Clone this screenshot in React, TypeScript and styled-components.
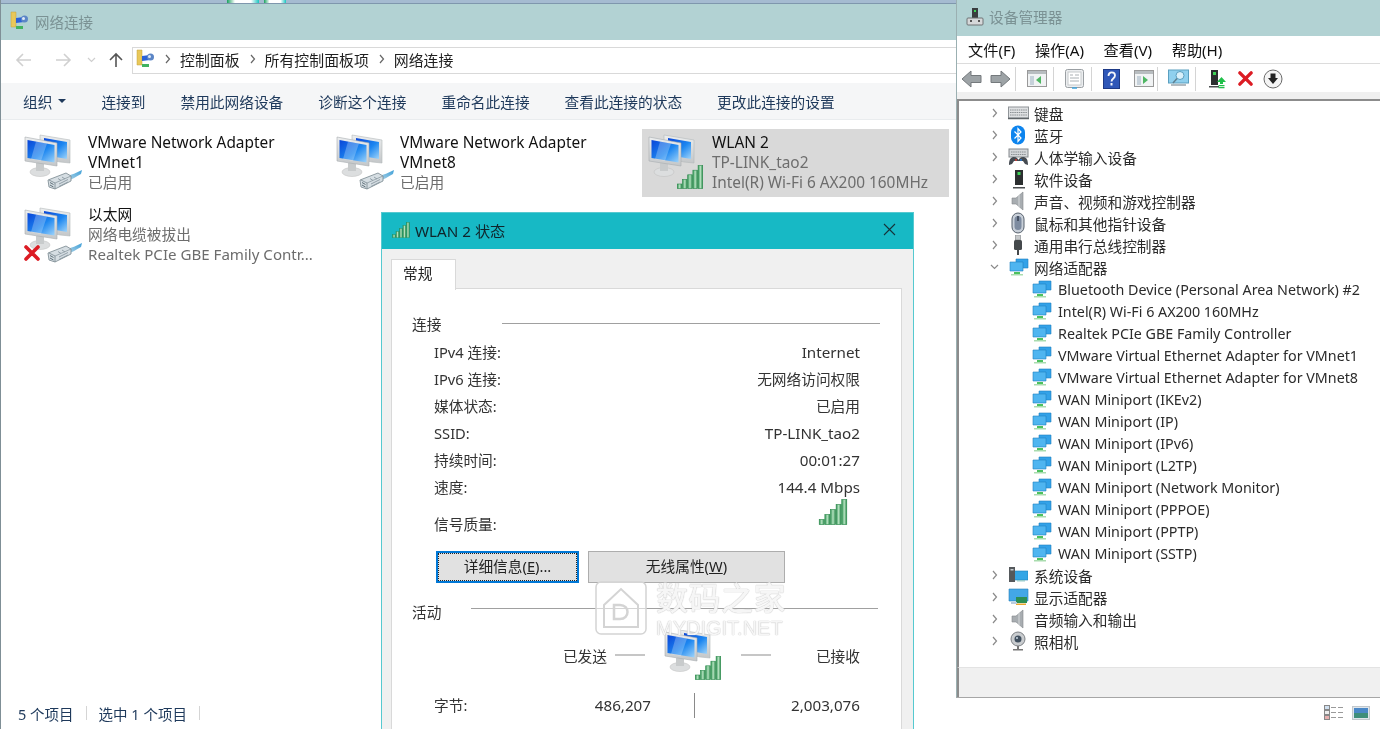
import React from "react";
import styled, { createGlobalStyle } from "styled-components";

const Global = createGlobalStyle`
  html, body { margin: 0; padding: 0; background: #fff; overflow: hidden; }
  * { box-sizing: border-box; }
  body { font-family: "Noto Sans", "Noto Sans CJK SC", sans-serif; color: #222; }
`;

const Screen = styled.div`
  position: relative; width: 1380px; height: 729px; display: flex; overflow: hidden; background: #fff;
  filter: blur(0.35px);
`;
const NetworkWindow = styled.div`
  width: 956px; height: 729px; display: flex; flex-direction: column; border-left: 1px solid #7f8f96;
`;
const DesktopStrip = styled.div`
  height: 4px; background: #a5bbd1; display: flex; border-bottom: 1px solid #7f97ad; flex: none;
`;
const StripBit = styled.span<{ $ml: number; $w: number }>`
  margin-left: ${p => p.$ml}px; width: ${p => p.$w}px; height: 3px;
  background: linear-gradient(90deg, #19a15f, #fff 25%, #fff 75%, #18c4c0);
`;
const TitleBar = styled.div`
  height: 36px; flex: none; background: #b2d2d3; display: flex; align-items: center; gap: 6px;
  padding: 0 0 2px 9px; font-size: 14.5px; color: #7b9294;
`;
const AddressRow = styled.div`
  height: 43px; flex: none; display: flex; align-items: center; background: #fff; padding-bottom: 3px;
`;
const NavButton = styled.span<{ $w: number }>`
  width: ${p => p.$w}px; display: flex; justify-content: center; flex: none;
`;
const AddressBox = styled.div`
  flex: 1; height: 27px; margin-left: 4px; border: 1px solid #d9d9d9; border-right: none;
  display: flex; align-items: center; padding: 0 0 2px 3px; font-size: 14.9px; color: #1f1f1f;
`;
const Crumb = styled.span` margin-left: 8px; `;
const CrumbArrow = styled.span`
  display: flex; margin-left: 8px;
`;
const CommandBar = styled.div`
  height: 37px; flex: none; background: #f5f6f7; border-bottom: 1px solid #e9ecee; display: flex; align-items: center;
  padding-left: 22px; gap: 35px; font-size: 14.7px; color: #1e395b;
`;
const OrganizeLabel = styled.span`
  display: flex; align-items: center; gap: 6px;
`;
const Caret = styled.i`
  width: 0; height: 0; border-left: 4px solid transparent; border-right: 4px solid transparent; border-top: 4px solid #1e395b;
`;
const Items = styled.div`
  flex: 1; display: grid; grid-template-columns: repeat(3, 307px); grid-auto-rows: 68px; gap: 5px;
  padding: 9px 0 0 17px; align-content: start;
`;
const Item = styled.div<{ $sel?: boolean }>`
  display: flex; background: ${p => (p.$sel ? "#d9d9d9" : "transparent")}; padding: 3px 0 0 4px; position: relative;
`;
const ItemIcon = styled.div`
  width: 66px; height: 60px; flex: none; position: relative;
`;
const ItemText = styled.div`
  font-size: 15.4px; line-height: 20px; white-space: nowrap; color: #111; padding-top: 1px;
`;
const ItemCn = styled.div`
  font-size: 14.7px; line-height: 21px; margin-top: -2px;
`;
const ItemSub = styled.div<{ $narrow?: boolean; $cn?: boolean }>`
  color: #6d6d6d; line-height: 20px;
  margin-top: ${p => (p.$cn ? "-1px" : "0")};
  font-size: ${p => (p.$cn ? "14.7px" : p.$narrow ? "15.1px" : "15.4px")};
`;
const RedCross = styled.span`
  position: absolute; left: 1px; bottom: 3px; display: flex;
`;
const StatusBar = styled.div`
  height: 25px; flex: none; display: flex; align-items: center; padding: 0 0 7px 17px; font-size: 14.5px; color: #1e395b;
`;
const StatusSep = styled.i`
  width: 1px; height: 14px; background: #d5d5d5; margin: 0 12px;
`;

const RightColumn = styled.div`
  flex: 1; display: flex; flex-direction: column; height: 729px;
`;
const DeviceWindow = styled.div`
  height: 698px; flex: none; display: flex; flex-direction: column; border-bottom: 1px solid #a6a6a6;
  border-left: 1px solid #9bb0b2; background: #fff;
`;
const DeviceTitle = styled.div`
  height: 36px; flex: none; background: #b2d2d3; display: flex; align-items: center; gap: 5px; padding: 0 0 3px 9px;
  font-size: 14.7px; color: #7b9294;
`;
const MenuBar = styled.div`
  height: 27px; flex: none; display: flex; align-items: center; gap: 19.500px; padding: 0 0 2px 11px; font-size: 15.200px; color: #111;
`;
const ToolBar = styled.div`
  height: 29px; flex: none; border-top: 1px solid #dcdcdc; display: flex; align-items: center; padding-top: 1px;
`;
const ToolIcon = styled.span<{ $w: number; $pl?: number }>`
  width: ${p => p.$w}px; padding-left: ${p => p.$pl ?? 0}px; flex: none; display: flex; justify-content: center;
`;
const ToolSep = styled.i`
  width: 1px; height: 24px; background: #d4d4d4; flex: none;
`;
const GreyStrip = styled.div` height: 7px; flex: none; background: #f0f0f0; `;
const TreePanel = styled.div`
  flex: 1; border-top: 2px solid #8c8c8c; border-left: 2px solid #8c8c8c; padding-top: 1px; background: #fff;
`;
const TreeRow = styled.div<{ $child?: boolean }>`
  height: 22px; display: flex; align-items: center; font-size: ${p => (p.$child ? 14.3 : 14.7)}px; color: #2b2b2b; white-space: nowrap;
  padding-left: ${p => (p.$child ? 73 : 31)}px;
`;
const Chevron = styled.span`
  width: 18px; display: flex; flex: none;
`;
const TreeIcon = styled.span`
  width: 26px; flex: none; display: flex; align-items: center;
`;
const DeviceStatus = styled.div`
  height: 30px; flex: none; background: #f0f0f0; border-left: 2px solid #8c8c8c; border-top: 1px solid #e3e3e3;
`;
const ViewIcons = styled.div`
  flex: 1; display: flex; justify-content: flex-end; align-items: center; gap: 9px; padding: 0 10px 2px 0; background: #fff;
`;

const Dialog = styled.div`
  position: absolute; left: 381px; top: 212px; width: 533px; height: 517px; background: #f0f0f0;
  border: 1px solid #56c9d0; border-bottom: none; display: flex; flex-direction: column;
`;
const DialogTitle = styled.div`
  height: 36px; flex: none; background: #17b9c5; display: flex; align-items: center; gap: 4px; padding: 0 17px 3px 9px;
  font-size: 15.2px; color: #10242a;
`;
const DialogTitleText = styled.span` flex: 1; `;
const TabRow = styled.div`
  padding: 10px 0 0 9px; height: 40px; flex: none; display: flex;
`;
const Tab = styled.div`
  width: 65px; height: 31px; background: #fff; border: 1px solid #d9d9d9; border-bottom: none; font-size: 14.7px;
  display: flex; align-items: center; padding: 0 0 5px 11px; position: relative; z-index: 1;
`;
const Panel = styled.div`
  margin: -1px 11px 0 9px; flex: 1; background: #fff; border: 1px solid #d9d9d9; border-bottom: none; font-size: 14.7px; color: #333;
`;
const SectionHead = styled.div<{ $mt: number; $gap: number; $pr: number; $lineUp: number }>`
  display: flex; align-items: center; height: 20px; margin-top: ${p => p.$mt}px; padding: 0 ${p => p.$pr}px 0 20px;
  &::after { content: ""; flex: 1; height: 1px; background: #a0a0a0; margin-left: ${p => p.$gap}px; transform: translateY(${p => -p.$lineUp}px); }
`;
const InfoList = styled.div` margin-top: 5px; padding: 0 41px 0 42px; `;
const InfoRow = styled.div`
  height: 27px; display: flex; justify-content: space-between; align-items: center;
`;
const InfoValue = styled.span<{ $cn: boolean }>`
  font-size: ${p => (p.$cn ? "14.7px" : "15.2px")};
`;
const SignalRow = styled.div`
  height: 37px; display: flex; justify-content: space-between; align-items: flex-end; padding-right: 12px;
`;
const SignalLabel = styled.span` line-height: 26px; `;
const SignalBox = styled.span` display: flex; margin-bottom: 12px; `;
const Buttons = styled.div` display: flex; gap: 9px; padding-left: 44px; margin-top: 14px; `;
const WinButton = styled.button<{ $w: number; $focus?: boolean }>`
  width: ${p => p.$w}px; height: 32px; font: inherit; font-size: 14.7px; color: #222; background: #e1e1e1; position: relative; padding: 0 0 4px;
  border: ${p => (p.$focus ? "2px solid #0078d7" : "1px solid #adadad")};
  outline: ${p => (p.$focus ? "1px dotted #222" : "none")}; outline-offset: -3px;
`;
const Key = styled.span` text-decoration: underline; `;
const ActivityRow = styled.div`
  display: flex; align-items: center; height: 50px; margin-top: 9px; padding-left: 42px;
`;
const ActivityLabel = styled.span<{ $w: number }>`
  width: ${p => p.$w}px; text-align: right; flex: none;
`;
const Dash = styled.i<{ $ml: number }>`
  width: 30px; height: 2px; background: #c6c6c6; margin-left: ${p => p.$ml}px; flex: none;
`;
const ActivityIcon = styled.span`
  width: 60px; height: 50px; margin-left: 17px; flex: none; display: flex;
`;
const BytesRow = styled.div`
  display: grid; grid-template-columns: 217px 86px 1fr; height: 25px; margin-top: 13px; padding: 0 41px 0 42px; align-items: center;
`;
const BytesValue = styled.span` text-align: right; font-size: 15.2px; line-height: 19px; `;
const BytesLabel = styled.span` line-height: 19px; `;
const BytesLabelRow = styled.span` display: flex; justify-content: space-between; `;
const BytesDivider = styled.i`
  width: 1px; height: 25px; background: #8a8a8a; justify-self: center;
`;
const Watermark = styled.div`
  position: absolute; left: 595px; top: 581px; width: 192px; height: 55px; display: flex; gap: 9px; pointer-events: none;
`;
const WatermarkText = styled.div`
  display: flex; flex-direction: column; color: rgba(255,255,255,.85); text-shadow: 0 0 1px #c2c2c2, 0 0 1px #c2c2c2;
`;
const WatermarkCn = styled.span` font-size: 32px; line-height: 34px; letter-spacing: 0.5px; font-weight: 500; white-space: nowrap; `;
const WatermarkEn = styled.span` font-size: 20px; line-height: 22px; margin-top: 2px; white-space: nowrap; font-family: "Liberation Sans", sans-serif; `;

const Arrow = ({ dir, color }: { dir: "l" | "r" | "u"; color: string }) => (
  <svg width="18" height="16" viewBox="0 0 18 16" fill="none" stroke={color} strokeWidth="1.6" aria-hidden>
    {dir === "l" && <path d="M16 8H2M8 2 2 8l6 6" />}
    {dir === "r" && <path d="M2 8h14M10 2l6 6-6 6" />}
    {dir === "u" && <path d="M9 15V2M3 8l6-6 6 6" />}
  </svg>
);
const SmallChevron = ({ down, color = "#8a8a8a" }: { down?: boolean; color?: string }) => (
  <svg width="9" height="10" viewBox="0 0 9 10" fill="none" stroke={color} strokeWidth="1.2" aria-hidden>
    {down ? <path d="M1 3l3.5 3.5L8 3" /> : <path d="M3 1l3.5 4L3 9" />}
  </svg>
);

const Computers = ({ dx = 0, dy = 0 }: { dx?: number; dy?: number }) => (
  <g transform={`translate(${dx} ${dy})`}>
    <defs>
      <linearGradient id="scr" x1="0" y1="0" x2="1" y2="1">
        <stop offset="0" stopColor="#0a45d8" />
        <stop offset=".55" stopColor="#1c86f0" />
        <stop offset="1" stopColor="#9fd4fa" />
      </linearGradient>
      <linearGradient id="frm" x1="0" y1="0" x2="0" y2="1">
        <stop offset="0" stopColor="#eceeef" />
        <stop offset="1" stopColor="#c4c7c9" />
      </linearGradient>
    </defs>
    <path d="M18 3 48 8V31L38 30 18 26Z" fill="url(#frm)" stroke="#b4b8ba" strokeWidth=".6" />
    <path d="M22 6 45 10V27L22 23Z" fill="url(#scr)" />
    <ellipse cx="18" cy="40" rx="10" ry="4.500" fill="#dcdedf" stroke="#bcbcbc" strokeWidth=".5" />
    <path d="M14 31h8v8h-8z" fill="#c8cbcc" />
    <path d="M3 5 35 11V34L3 29Z" fill="url(#frm)" stroke="#a8acb0" strokeWidth=".6" />
    <path d="M5.500 8 32.500 13V30.500L5.500 26Z" fill="url(#scr)" />
    <path d="M14 9.500 25 11.500 19 29 9 27Z" fill="#fff" opacity=".25" />
  </g>
);
const Plug = () => (
  <g>
    <defs>
      <linearGradient id="cable" x1="0" y1="1" x2="1" y2="0">
        <stop offset="0" stopColor="#b9d8e8" />
        <stop offset="1" stopColor="#3fa0d8" />
      </linearGradient>
    </defs>
    <path d="M44 44C50 43 54 41 60 38L59 42C54 45 50 47 46 49Z" fill="url(#cable)" />
    <path d="M26 48 44 41 49 44 49 49 33 57 27 55Z" fill="#d6dee3" stroke="#77868e" strokeWidth=".8" />
    <path d="M27 48 33 51 33 57" fill="none" stroke="#77868e" strokeWidth=".8" />
    <path d="M33 51 49 44" stroke="#8d9ba2" strokeWidth=".8" />
    <path d="M28 50.500 31.500 52.500M28 53 31.500 55" stroke="#5f7079" strokeWidth="1" />
    <path d="M36 46.500 39 48.500M40 45l3 2M37 52l9-4.500M37 54.500l9-4.500" stroke="#8b99a1" strokeWidth=".9" />
  </g>
);
const Signal = ({ w = 26, h = 24 }: { w?: number; h?: number }) => (
  <svg width={w} height={h} viewBox="0 0 26 24" aria-hidden>
    <defs>
      <linearGradient id="sig" x1="0" y1="0" x2="1" y2="0">
        <stop offset="0" stopColor="#2f9152" />
        <stop offset=".5" stopColor="#b5e2c0" />
        <stop offset="1" stopColor="#2b8a4c" />
      </linearGradient>
    </defs>
    {[0, 1, 2, 3, 4].map(i => (
      <rect key={i} x={i * 5.2 + 0.3} y={19 - i * 4.6} width="4.600" height={4.6 + i * 4.6} fill="url(#sig)" stroke="#2b8a4c" strokeWidth=".6" />
    ))}
  </svg>
);
const NetPlugIcon = () => (
  <svg width="62" height="60" viewBox="0 0 62 60" aria-hidden>
    <Computers />
    <Plug />
  </svg>
);
const NetSignalIcon = () => (
  <svg width="62" height="60" viewBox="0 0 62 60" aria-hidden>
    <Computers />
    <g transform="translate(31 33)">
      <Signal />
    </g>
  </svg>
);
const ActivityNetIcon = () => (
  <svg width="60" height="50" viewBox="0 0 60 50" aria-hidden>
    <Computers dy={-3} />
    <g transform="translate(33 26)">
      <Signal w={26} h={24} />
    </g>
  </svg>
);
const Cross = ({ s = 18 }: { s?: number }) => (
  <svg width={s} height={s} viewBox="0 0 18 18" aria-hidden>
    <path d="M3 3l12 12M15 3 3 15" stroke="#dc1c24" strokeWidth="3.600" strokeLinecap="round" />
  </svg>
);
const FolderNet = () => (
  <svg width="19" height="20" viewBox="0 0 19 20" aria-hidden>
    <path d="M1 1h5v15H1z" fill="#e9c85a" stroke="#c2a23c" strokeWidth=".5" />
    <path d="M6 7l8-1v5l-8 1z" fill="#2b62d8" />
    <circle cx="14.500" cy="8" r="3.500" fill="#5c86c6" />
    <circle cx="13.500" cy="7.500" r="1.500" fill="#dfe9f7" />
    <path d="M6 15h7v3H6z" fill="#41b360" />
  </svg>
);

const AdapterIcon = () => (
  <svg width="20" height="18" viewBox="0 0 20 18" aria-hidden>
    <path d="M7 1h12v9H7z" fill="#33a2e8" stroke="#1f7fc0" strokeWidth=".6" />
    <path d="M1 4h13v9H1z" fill="#4fb5f0" stroke="#1f7fc0" strokeWidth=".6" />
    <path d="M5 14h6v2H5z" fill="#4cc15e" />
    <path d="M2 16h12v1.500H2z" fill="#a9dcae" />
  </svg>
);
const TreeGlyph = ({ kind }: { kind: string }) => {
  switch (kind) {
    case "keyboard":
      return (
        <svg width="21" height="14" viewBox="0 0 21 14" aria-hidden>
          <rect x=".5" y="1" width="20" height="11" fill="#dfe1e3" stroke="#8f9498" />
          <path d="M2 4h17M2 6.500h17M2 9h17" stroke="#8a8f93" strokeDasharray="1.500 .7" />
          <path d="M0 12.500h21" stroke="#5f6468" strokeWidth="1.500" />
        </svg>
      );
    case "bluetooth":
      return (
        <svg width="16" height="20" viewBox="0 0 16 20" style={{ marginLeft: 2 }} aria-hidden>
          <rect x="1" y=".5" width="14" height="19" rx="7" fill="#0d84ee" />
          <path d="M4.500 6.500 11 13l-3 3.500V3.500L11 7l-6.500 6.500" fill="none" stroke="#fff" strokeWidth="1.200" />
        </svg>
      );
    case "hid":
      return (
        <svg width="21" height="18" viewBox="0 0 21 18" aria-hidden>
          <rect x="1" y="1" width="19" height="8" fill="#d4d7da" stroke="#858a8e" />
          <path d="M3 4h15M3 6.500h15" stroke="#8a8f93" strokeDasharray="1.500 .7" />
          <path d="M1 17c0-6 2-8 5-8s4 2 4.500 3c.5-1 1.500-3 4.500-3s5 2 5 8l-3-1-2-3h-9l-2 3z" fill="#454b52" />
          <circle cx="8" cy="12" r="1" fill="#d8392f" />
          <circle cx="13" cy="12" r="1" fill="#2f7fd8" />
        </svg>
      );
    case "software":
      return (
        <svg width="12" height="20" viewBox="0 0 12 20" style={{ marginLeft: 5 }} aria-hidden>
          <rect x="2" y="1" width="8" height="15" fill="#2c2f30" />
          <rect x="4.500" y="3" width="3" height="3" fill="#3fd457" />
          <path d="M0 18h12v1.500H0z" fill="#4b4e50" />
        </svg>
      );
    case "speaker":
      return (
        <svg width="14" height="20" viewBox="0 0 14 20" style={{ marginLeft: 3 }} aria-hidden>
          <path d="M1 7h4l7-6v18l-7-6H1z" fill="#a8adb1" stroke="#83888c" strokeWidth=".6" />
          <path d="M8 4v12" stroke="#d8dbdd" />
        </svg>
      );
    case "mouse":
      return (
        <svg width="14" height="22" viewBox="0 0 14 22" style={{ marginLeft: 3 }} aria-hidden>
          <rect x="1" y="1" width="12" height="20" rx="6" fill="#c8cfd8" stroke="#56606c" />
          <rect x="3.500" y="4" width="7" height="14" rx="3.500" fill="#7d8ba0" />
          <rect x="6" y="4" width="2" height="5" fill="#475264" />
        </svg>
      );
    case "usb":
      return (
        <svg width="10" height="20" viewBox="0 0 10 20" style={{ marginLeft: 5 }} aria-hidden>
          <rect x="2.500" y="0" width="5" height="5" fill="#c6c9cb" stroke="#7f8385" strokeWidth=".6" />
          <rect x="1" y="5" width="8" height="10" rx="1.500" fill="#45494c" />
          <path d="M5 15v5" stroke="#45494c" strokeWidth="2" />
        </svg>
      );
    case "network":
      return (
        <svg width="20" height="18" viewBox="0 0 20 18" style={{ marginLeft: 1 }} aria-hidden>
          <path d="M7 1h12v9H7z" fill="#33a2e8" stroke="#1f7fc0" strokeWidth=".6" />
          <path d="M1 4h13v9H1z" fill="#4fb5f0" stroke="#1f7fc0" strokeWidth=".6" />
          <path d="M5 14h6v2H5z" fill="#4cc15e" />
          <path d="M2 16h12v1.500H2z" fill="#a9dcae" />
        </svg>
      );
    case "system":
      return (
        <svg width="20" height="18" viewBox="0 0 20 18" aria-hidden>
          <path d="M6 5h14v9H6z" fill="#34a6e6" stroke="#1b7fbb" strokeWidth=".6" />
          <path d="M9 14h8v1.500H9z" fill="#9cc" />
          <rect x="1" y="1" width="6" height="15" fill="#55595c" />
          <rect x="2.500" y="3" width="3" height="1.500" fill="#c5ccd0" />
        </svg>
      );
    case "display":
      return (
        <svg width="21" height="18" viewBox="0 0 21 18" aria-hidden>
          <path d="M1 1h19v12H1z" fill="#43a7e6" stroke="#2680bc" strokeWidth=".6" />
          <path d="M8 9h11v6H8z" fill="#2d8f55" />
          <path d="M8 15.500h10v1.500H8z" fill="#e9a92f" />
          <path d="M3 14h6v2H3z" fill="#bcd" />
        </svg>
      );
    default:
      return (
        <svg width="16" height="20" viewBox="0 0 16 20" style={{ marginLeft: 2 }} aria-hidden>
          <circle cx="8" cy="8" r="7" fill="#c9cccf" stroke="#7d8185" />
          <circle cx="8" cy="8" r="3.500" fill="#41505f" />
          <circle cx="7" cy="7" r="1" fill="#c6d3df" />
          <path d="M7 15h2v3H7zM3 18h10v1.500H3z" fill="#777" />
        </svg>
      );
  }
};

const ToolGlyph = ({ kind }: { kind: string }) => {
  switch (kind) {
    case "back":
      return (
        <svg width="21" height="18" viewBox="0 0 21 18" aria-hidden>
          <path d="M1 9l9-8v4.500h10v7H10V17z" fill="#9da3a6" stroke="#74797c" />
        </svg>
      );
    case "fwd":
      return (
        <svg width="21" height="18" viewBox="0 0 21 18" aria-hidden>
          <path d="M20 9l-9-8v4.500H1v7h10V17z" fill="#9da3a6" stroke="#74797c" />
        </svg>
      );
    case "tree":
    case "treeR":
      return (
        <svg width="20" height="17" viewBox="0 0 20 17" aria-hidden>
          <rect x=".5" y=".5" width="19" height="16" fill="#f1f3f4" stroke="#999" />
          <path d="M1 1h18v3H1z" fill="#b8bdc0" />
          <path d="M3 6h4v9H3z" fill="#c6d1da" />
          {kind === "tree" ? <path d="M14 6v8l-5-4z" fill="#4fb663" /> : <path d="M9 6v8l5-4z" fill="#4fb663" />}
        </svg>
      );
    case "props":
      return (
        <svg width="19" height="20" viewBox="0 0 19 20" aria-hidden>
          <rect x=".5" y=".5" width="18" height="18" rx="2" fill="#eceef0" stroke="#9a9fa3" />
          <rect x="3" y="3" width="13" height="13" fill="#fff" stroke="#c6cacc" />
          <path d="M5 6h3M10 6h4M5 9h9M5 12h9" stroke="#aab0b4" />
          <path d="M7 19h5" stroke="#3fa3dc" strokeWidth="1.500" />
        </svg>
      );
    case "help":
      return (
        <svg width="17" height="20" viewBox="0 0 17 20" aria-hidden>
          <rect x=".5" y=".5" width="16" height="19" fill="#2f57b8" stroke="#1e3a86" />
          <path d="M5.500 7c0-5 6.500-4.500 6.500-.5 0 3-3.500 3-3.500 6" fill="none" stroke="#f4f6fb" strokeWidth="1.800" />
          <rect x="7.500" y="14" width="2" height="2.500" fill="#f4f6fb" />
        </svg>
      );
    case "monitor":
      return (
        <svg width="21" height="19" viewBox="0 0 21 19" aria-hidden>
          <rect x=".5" y="1" width="20" height="13" fill="#8fd0ee" stroke="#5a9fc0" />
          <circle cx="12" cy="6.500" r="4" fill="#d9f0fa" stroke="#5a9fc0" />
          <path d="M9 9.500 5 14" stroke="#5d7f90" strokeWidth="1.500" />
          <path d="M3 16h15" stroke="#9aa5ab" strokeWidth="1.500" />
        </svg>
      );
    case "update":
      return (
        <svg width="17" height="20" viewBox="0 0 17 20" aria-hidden>
          <rect x="2" y="1" width="7" height="15" fill="#2c2f30" />
          <rect x="4" y="3" width="3" height="3" fill="#3fd457" />
          <path d="M0 17h10v1.500H0z" fill="#4b4e50" />
          <path d="M8 13l4.500-5 4.500 5h-3v2h-3v-2z" fill="#21c04a" />
          <path d="M9.500 16h6v1.200h-6zM9.500 18h6v1.200h-6z" fill="#21c04a" />
        </svg>
      );
    default:
      return (
        <svg width="20" height="20" viewBox="0 0 20 20" aria-hidden>
          <circle cx="10" cy="10" r="9" fill="#f4f4f4" stroke="#6a6a6a" />
          <path d="M7.500 4.500h5V9H15l-5 6-5-6h2.500z" fill="#222" />
        </svg>
      );
  }
};

const topTree = [
  ["keyboard", "键盘"],
  ["bluetooth", "蓝牙"],
  ["hid", "人体学输入设备"],
  ["software", "软件设备"],
  ["speaker", "声音、视频和游戏控制器"],
  ["mouse", "鼠标和其他指针设备"],
  ["usb", "通用串行总线控制器"],
];
const adapters = [
  "Bluetooth Device (Personal Area Network) #2",
  "Intel(R) Wi-Fi 6 AX200 160MHz",
  "Realtek PCIe GBE Family Controller",
  "VMware Virtual Ethernet Adapter for VMnet1",
  "VMware Virtual Ethernet Adapter for VMnet8",
  "WAN Miniport (IKEv2)",
  "WAN Miniport (IP)",
  "WAN Miniport (IPv6)",
  "WAN Miniport (L2TP)",
  "WAN Miniport (Network Monitor)",
  "WAN Miniport (PPPOE)",
  "WAN Miniport (PPTP)",
  "WAN Miniport (SSTP)",
];
const bottomTree = [
  ["system", "系统设备"],
  ["display", "显示适配器"],
  ["speaker", "音频输入和输出"],
  ["camera", "照相机"],
];
const info: [string, string, boolean][] = [
  ["IPv4 连接:", "Internet", false],
  ["IPv6 连接:", "无网络访问权限", true],
  ["媒体状态:", "已启用", true],
  ["SSID:", "TP-LINK_tao2", false],
  ["持续时间:", "00:01:27", false],
  ["速度:", "144.4 Mbps", false],
];

export default function App() {
  return (
    <Screen>
      <Global />
      <NetworkWindow>
        <DesktopStrip>
          <StripBit $ml={226} $w={32} />
          <StripBit $ml={5} $w={22} />
        </DesktopStrip>
        <TitleBar>
          <FolderNet />
          网络连接
        </TitleBar>
        <AddressRow>
          <NavButton $w={46}><Arrow dir="l" color="#d0d0d0" /></NavButton>
          <NavButton $w={31}><Arrow dir="r" color="#d0d0d0" /></NavButton>
          <NavButton $w={26}><SmallChevron down color="#cfcfcf" /></NavButton>
          <NavButton $w={24}><Arrow dir="u" color="#555" /></NavButton>
          <AddressBox>
            <FolderNet />
            <CrumbArrow><SmallChevron color="#666" /></CrumbArrow>
            <Crumb>控制面板</Crumb>
            <CrumbArrow><SmallChevron color="#666" /></CrumbArrow>
            <Crumb>所有控制面板项</Crumb>
            <CrumbArrow><SmallChevron color="#666" /></CrumbArrow>
            <Crumb>网络连接</Crumb>
          </AddressBox>
        </AddressRow>
        <CommandBar>
          <OrganizeLabel>组织<Caret /></OrganizeLabel>
          <span>连接到</span>
          <span>禁用此网络设备</span>
          <span>诊断这个连接</span>
          <span>重命名此连接</span>
          <span>查看此连接的状态</span>
          <span>更改此连接的设置</span>
        </CommandBar>
        <Items>
          <Item>
            <ItemIcon><NetPlugIcon /></ItemIcon>
            <ItemText>VMware Network Adapter<br />VMnet1<ItemSub $cn>已启用</ItemSub></ItemText>
          </Item>
          <Item>
            <ItemIcon><NetPlugIcon /></ItemIcon>
            <ItemText>VMware Network Adapter<br />VMnet8<ItemSub $cn>已启用</ItemSub></ItemText>
          </Item>
          <Item $sel>
            <ItemIcon><NetSignalIcon /></ItemIcon>
            <ItemText>WLAN 2<ItemSub>TP-LINK_tao2</ItemSub><ItemSub>Intel(R) Wi-Fi 6 AX200 160MHz</ItemSub></ItemText>
          </Item>
          <Item>
            <ItemIcon>
              <NetPlugIcon />
              <RedCross><Cross /></RedCross>
            </ItemIcon>
            <ItemText><ItemCn>以太网</ItemCn><ItemSub $cn>网络电缆被拔出</ItemSub><ItemSub $narrow>Realtek PCIe GBE Family Contr...</ItemSub></ItemText>
          </Item>
        </Items>
        <StatusBar>
          5 个项目<StatusSep />选中 1 个项目<StatusSep />
        </StatusBar>
      </NetworkWindow>

      <RightColumn>
        <DeviceWindow>
          <DeviceTitle>
            <svg width="18" height="20" viewBox="0 0 18 20" aria-hidden>
              <rect x="6" y="1" width="6" height="10" fill="#3a3d3f" />
              <rect x="8" y="3" width="2" height="2" fill="#3fd457" />
              <rect x="1" y="11" width="16" height="7" rx="1" fill="#d6d8d9" stroke="#6e7274" />
              <path d="M4 14h2M12 14h2" stroke="#555" strokeWidth="2" />
            </svg>
            设备管理器
          </DeviceTitle>
          <MenuBar>
            <span>文件(F)</span><span>操作(A)</span><span>查看(V)</span><span>帮助(H)</span>
          </MenuBar>
          <ToolBar>
            <ToolIcon $w={28}><ToolGlyph kind="back" /></ToolIcon>
            <ToolIcon $w={30}><ToolGlyph kind="fwd" /></ToolIcon>
            <ToolSep />
            <ToolIcon $w={37} $pl={5}><ToolGlyph kind="tree" /></ToolIcon>
            <ToolSep />
            <ToolIcon $w={37} $pl={3}><ToolGlyph kind="props" /></ToolIcon>
            <ToolSep />
            <ToolIcon $w={38}><ToolGlyph kind="help" /></ToolIcon>
            <ToolIcon $w={27}><ToolGlyph kind="treeR" /></ToolIcon>
            <ToolSep />
            <ToolIcon $w={37} $pl={4}><ToolGlyph kind="monitor" /></ToolIcon>
            <ToolSep />
            <ToolIcon $w={40} $pl={3}><ToolGlyph kind="update" /></ToolIcon>
            <ToolIcon $w={18}><Cross s={17} /></ToolIcon>
            <ToolIcon $w={38}><ToolGlyph kind="down" /></ToolIcon>
          </ToolBar>
          <GreyStrip />
          <TreePanel>
            {topTree.map(([k, t]) => (
              <TreeRow key={t}>
                <Chevron><SmallChevron /></Chevron>
                <TreeIcon><TreeGlyph kind={k} /></TreeIcon>
                {t}
              </TreeRow>
            ))}
            <TreeRow>
              <Chevron><SmallChevron down /></Chevron>
              <TreeIcon><TreeGlyph kind="network" /></TreeIcon>
              网络适配器
            </TreeRow>
            {adapters.map(t => (
              <TreeRow $child key={t}>
                <TreeIcon><AdapterIcon /></TreeIcon>
                {t}
              </TreeRow>
            ))}
            {bottomTree.map(([k, t]) => (
              <TreeRow key={t}>
                <Chevron><SmallChevron /></Chevron>
                <TreeIcon><TreeGlyph kind={k} /></TreeIcon>
                {t}
              </TreeRow>
            ))}
          </TreePanel>
          <DeviceStatus />
        </DeviceWindow>
        <ViewIcons>
          <svg width="19" height="15" viewBox="0 0 19 15" aria-hidden>
            <rect x=".5" y=".5" width="5" height="4" fill="#cfe0f0" stroke="#888" />
            <rect x=".5" y="5.500" width="5" height="4" fill="#eee" stroke="#888" />
            <rect x=".5" y="10.500" width="5" height="4" fill="#e8b0b0" stroke="#888" />
            <path d="M7 2.500h5M14 2.500h5M7 7.500h5M14 7.500h5M7 12.500h5M14 12.500h5" stroke="#9a9a9a" />
          </svg>
          <svg width="18" height="14" viewBox="0 0 18 14" aria-hidden>
            <rect x=".5" y=".5" width="17" height="13" fill="#dfe6ec" stroke="#c2c8cc" />
            <rect x="2" y="2" width="14" height="5" fill="#4a88c7" />
            <rect x="2" y="7" width="14" height="5" fill="#3f8e7a" />
          </svg>
        </ViewIcons>
      </RightColumn>

      <Dialog>
        <DialogTitle>
          <Signal w={20} h={16} />
          <DialogTitleText>WLAN 2 状态</DialogTitleText>
          <svg width="13" height="13" viewBox="0 0 13 13" aria-hidden>
            <path d="M1 1l11 11M12 1 1 12" stroke="#16333a" strokeWidth="1.100" />
          </svg>
        </DialogTitle>
        <TabRow><Tab>常规</Tab></TabRow>
        <Panel>
          <SectionHead $mt={24} $gap={61} $pr={21} $lineUp={0}>连接</SectionHead>
          <InfoList>
            {info.map(([k, v, cn]) => (
              <InfoRow key={k}><span>{k}</span><InfoValue $cn={cn}>{v}</InfoValue></InfoRow>
            ))}
            <SignalRow>
              <SignalLabel>信号质量:</SignalLabel>
              <SignalBox><Signal w={30} h={26} /></SignalBox>
            </SignalRow>
          </InfoList>
          <Buttons>
            <WinButton $w={143} $focus>详细信息(<Key>E</Key>)...</WinButton>
            <WinButton $w={197}>无线属性(<Key>W</Key>)</WinButton>
          </Buttons>
          <SectionHead $mt={18} $gap={30} $pr={23} $lineUp={3}>活动</SectionHead>
          <ActivityRow>
            <ActivityLabel $w={173}>已发送</ActivityLabel>
            <Dash $ml={8} />
            <ActivityIcon><ActivityNetIcon /></ActivityIcon>
            <Dash $ml={19} />
            <ActivityLabel $w={89}>已接收</ActivityLabel>
          </ActivityRow>
          <BytesRow>
            <BytesLabelRow><BytesLabel>字节:</BytesLabel><BytesValue>486,207</BytesValue></BytesLabelRow>
            <BytesDivider />
            <BytesValue>2,003,076</BytesValue>
          </BytesRow>
        </Panel>
      </Dialog>

      <Watermark>
        <svg width="52" height="54" viewBox="0 0 52 54" aria-hidden>
          <rect x="1" y="1" width="50" height="52" rx="5" fill="rgba(255,255,255,.55)" stroke="#d4d4d4" strokeWidth="1.500" />
          <path d="M9 24 26 8l17 16v22H9z" fill="none" stroke="#d4d4d4" strokeWidth="2" />
          <path d="M19 24h6c10 0 10 14 0 14h-6z" fill="none" stroke="#d4d4d4" strokeWidth="2.500" />
        </svg>
        <WatermarkText>
          <WatermarkCn>数码之家</WatermarkCn>
          <WatermarkEn>MYDIGIT.NET</WatermarkEn>
        </WatermarkText>
      </Watermark>
    </Screen>
  );
}
